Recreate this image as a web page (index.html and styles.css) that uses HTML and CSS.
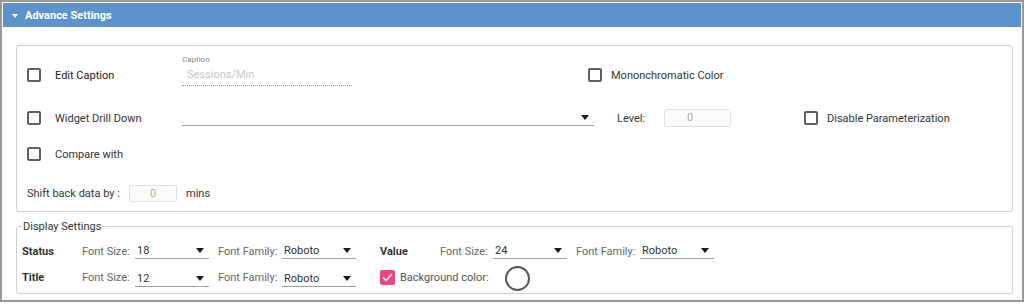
FILE: index.html
```html
<!DOCTYPE html>
<html lang="en">
<head>
    <meta charset="UTF-8">
    <meta name="viewport" content="width=device-width, initial-scale=1.0">
    <title>Advance Settings</title>
    <link rel="stylesheet" href="styles.css">
</head>
<body>
    <div class="panel">
        <div class="panel-header">
            <span class="caret"></span>
            <span class="panel-title">Advance Settings</span>
        </div>

        <div class="box">
            <div class="row row-1">
                <div class="check-item col-first">
                    <span class="checkbox"></span>
                    <span class="check-label strong">Edit Caption</span>
                </div>
                <div class="caption-field">
                    <span class="caption-label">Caption</span>
                    <div class="caption-input">Sessions/Min</div>
                </div>
                <div class="check-item mono">
                    <span class="checkbox"></span>
                    <span class="check-label">Mononchromatic Color</span>
                </div>
            </div>

            <div class="row row-2">
                <div class="check-item col-first">
                    <span class="checkbox"></span>
                    <span class="check-label">Widget Drill Down</span>
                </div>
                <div class="select drill-select"><span class="arrow"></span></div>
                <span class="level-label">Level:</span>
                <div class="small-input level-input">0</div>
                <div class="check-item disable">
                    <span class="checkbox"></span>
                    <span class="check-label">Disable Parameterization</span>
                </div>
            </div>

            <div class="row row-3">
                <div class="check-item col-first">
                    <span class="checkbox"></span>
                    <span class="check-label">Compare with</span>
                </div>
            </div>

            <div class="row row-4">
                <span class="shift-label">Shift back data by :</span>
                <div class="small-input shift-input">0</div>
                <span class="mins">mins</span>
            </div>
        </div>

        <fieldset class="display">
            <legend>Display Settings</legend>
            <div class="drow">
                <span class="dname">Status</span>
                <span class="dlabel size-label">Font Size:</span>
                <div class="select dselect">18<span class="arrow"></span></div>
                <span class="dlabel family-label">Font Family:</span>
                <div class="select dselect">Roboto<span class="arrow"></span></div>
                <span class="dname value-name">Value</span>
                <span class="dlabel size-label">Font Size:</span>
                <div class="select dselect">24<span class="arrow"></span></div>
                <span class="dlabel family-label">Font Family:</span>
                <div class="select dselect">Roboto<span class="arrow"></span></div>
            </div>
            <div class="drow drow-2">
                <span class="dname">Title</span>
                <span class="dlabel size-label">Font Size:</span>
                <div class="select dselect">12<span class="arrow"></span></div>
                <span class="dlabel family-label">Font Family:</span>
                <div class="select dselect">Roboto<span class="arrow"></span></div>
                <span class="pink-check">
                    <svg width="11" height="9" viewBox="0 0 11 9"><path d="M1 4.5 L4 7.5 L10 1" fill="none" stroke="#fff" stroke-width="1.5"/></svg>
                </span>
                <span class="bg-label">Background color:</span>
                <span class="color-circle"></span>
            </div>
        </fieldset>
    </div>
</body>
</html>
```

FILE: styles.css
```css
body {
    margin: 0;
    font-family: Roboto, "Liberation Sans", sans-serif;
    font-size: 11px;
    color: #333;
    background: #fff;
}

.panel {
    width: 1024px;
    height: 302px;
    box-sizing: border-box;
    border: 2px solid #9a9a9a;
    padding: 1px;
}

.panel-header {
    height: 24px;
    background: #5b93ca;
    display: flex;
    align-items: center;
    padding-left: 9px;
    color: #fff;
}

.caret {
    width: 0;
    height: 0;
    border-left: 3px solid transparent;
    border-right: 3px solid transparent;
    border-top: 4px solid #fff;
    margin-right: 7px;
    margin-top: 1px;
}

.panel-title {
    font-weight: bold;
    font-size: 11px;
}

.box {
    margin: 18px 8px 0 13px;
    height: 167px;
    box-sizing: border-box;
    border: 1px solid #cfcfcf;
    border-radius: 3px;
    padding: 9px 10px 0;
}

.row {
    display: flex;
    align-items: center;
}

.row-1 { height: 40px; }
.row-2 { height: 40px; margin-top: 3px; }
.row-3 { height: 32px; }
.row-4 { height: 32px; margin-top: 7px; }

.check-item {
    display: flex;
    align-items: center;
}

.col-first {
    width: 155px;
    flex: none;
}

.checkbox {
    width: 14px;
    height: 14px;
    box-sizing: border-box;
    border: 2px solid #5f5f5f;
    border-radius: 2px;
    flex: none;
}

.check-label {
    margin-left: 14px;
    color: #333;
}

.check-label.strong {
    color: #222;
}

.mono .check-label,
.disable .check-label {
    margin-left: 9px;
}

.caption-field {
    width: 170px;
    align-self: flex-start;
    display: flex;
    flex-direction: column;
}

.caption-label {
    font-size: 8px;
    line-height: 9px;
    color: #888;
}

.caption-input {
    height: 22px;
    box-sizing: border-box;
    border-bottom: 1px dotted #999;
    padding-left: 5px;
    line-height: 21px;
    color: #c6c6c6;
}

.mono {
    margin-left: 236px;
}

.select {
    position: relative;
    box-sizing: border-box;
    border-bottom: 1px solid #9e9e9e;
}

.arrow {
    position: absolute;
    right: 5px;
    top: 5px;
    width: 0;
    height: 0;
    border-left: 4px solid transparent;
    border-right: 4px solid transparent;
    border-top: 5px solid #1a1a1a;
}

.drill-select {
    width: 412px;
    height: 14px;
    margin-top: 2px;
}

.drill-select .arrow {
    top: 3px;
}

.level-label {
    margin-left: 23px;
    width: 47px;
    color: #333;
}

.small-input {
    box-sizing: border-box;
    border: 1px solid #e0e0e0;
    border-radius: 2px;
    background: #fbfbfb;
    color: #aaa;
}

.level-input {
    width: 67px;
    height: 18px;
    line-height: 16px;
    padding-left: 22px;
}

.disable {
    margin-left: 73px;
}

.shift-label {
    width: 102px;
    color: #333;
}

.shift-input {
    width: 48px;
    height: 17px;
    line-height: 15px;
    text-align: center;
}

.mins {
    margin-left: 9px;
}

.display {
    margin: 8px 8px 0 13px;
    padding: 0 5px 3px 5px;
    border: 1px solid #cfcfcf;
    border-radius: 3px;
}

.display legend {
    padding: 0 1px;
    line-height: 13px;
    color: #333;
}

.drow {
    display: flex;
    align-items: center;
    height: 22px;
    margin-top: 7px;
}

.drow-2 {
    height: 25px;
    margin-top: 3px;
}

.dname {
    width: 60px;
    font-weight: bold;
    color: #333;
}

.value-name {
    margin-left: 24px;
}

.dlabel {
    color: #666;
}

.size-label {
    width: 53px;
}

.family-label {
    width: 64px;
}

.dselect {
    width: 74px;
    height: 16px;
    padding-left: 2px;
    padding-top: 1px;
    line-height: 14px;
    color: #333;
}

.dselect + .dlabel {
    margin-left: 9px;
}

.drow-2 .dselect {
    margin-top: 2px;
}

.pink-check {
    margin-left: 24px;
    width: 15px;
    height: 15px;
    background: #f0457e;
    border-radius: 2px;
    display: flex;
    align-items: center;
    justify-content: center;
}

.bg-label {
    margin-left: 5px;
    width: 105px;
    color: #555;
}

.color-circle {
    width: 25px;
    height: 25px;
    box-sizing: border-box;
    border: 2px solid #555;
    border-radius: 50%;
    margin-top: 2px;
}
```
